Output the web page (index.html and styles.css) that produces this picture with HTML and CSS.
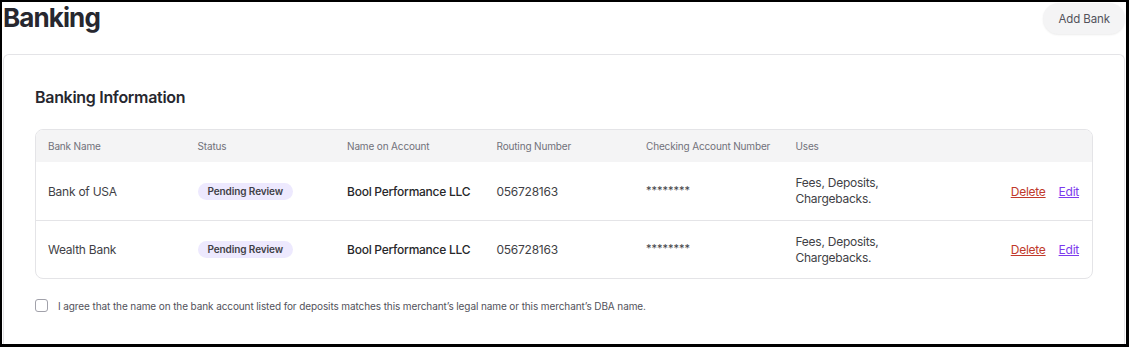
FILE: index.html
```html
<!DOCTYPE html>
<html>
  <head>
    <meta charset="utf-8"/>
    <title>Banking</title>
    <link rel="stylesheet" href="styles.css">
  </head>
  <body>
    <div class="frame">

      <div class="page-head">
        <h1 class="page-title">Banking</h1>
        <button class="add-bank">Add Bank</button>
      </div>

      <div class="card">
        <h2 class="card-title">Banking Information</h2>

        <div class="bank-table">
          <div class="bank-row bank-row-head">
            <div class="cell">Bank Name</div>
            <div class="cell">Status</div>
            <div class="cell">Name on Account</div>
            <div class="cell">Routing Number</div>
            <div class="cell">Checking Account Number</div>
            <div class="cell">Uses</div>
            <div class="cell"></div>
          </div>

          <div class="bank-row">
            <div class="cell">Bank of USA</div>
            <div class="cell"><span class="badge">Pending Review</span></div>
            <div class="cell cell-strong">Bool Performance LLC</div>
            <div class="cell">056728163</div>
            <div class="cell cell-mask">********</div>
            <div class="cell cell-uses">Fees, Deposits,<br>Chargebacks.</div>
            <div class="cell cell-actions">
              <a href="#" class="link-delete">Delete</a>
              <a href="#" class="link-edit">Edit</a>
            </div>
          </div>

          <div class="bank-row">
            <div class="cell">Wealth Bank</div>
            <div class="cell"><span class="badge">Pending Review</span></div>
            <div class="cell cell-strong">Bool Performance LLC</div>
            <div class="cell">056728163</div>
            <div class="cell cell-mask">********</div>
            <div class="cell cell-uses">Fees, Deposits,<br>Chargebacks.</div>
            <div class="cell cell-actions">
              <a href="#" class="link-delete">Delete</a>
              <a href="#" class="link-edit">Edit</a>
            </div>
          </div>
        </div>

        <label class="agree">
          <input type="checkbox" class="agree-box">
          <span>I agree that the name on the bank account listed for deposits matches this merchant’s legal name or this merchant’s DBA name.</span>
        </label>
      </div>

    </div>
  </body>
</html>
```

FILE: styles.css
```css
/* page is shot at 1129 x 347 */

body
{
margin: 0;
background-color: #FFFFFF;
font-family: "Inter", "Liberation Sans", sans-serif;
color: #27272A;
}

.frame
{
height: 347px;
box-sizing: border-box;
border: solid #000000;
border-width: 2px 3px 3px 2px;
display: flex;
flex-direction: column;
}

.page-head
{
height: 52px;
display: flex;
justify-content: space-between;
align-items: flex-start;
padding: 0 1px;
}

.page-title
{
margin: 0;
font-size: 26px;
line-height: 32px;
font-weight: 700;
color: #27272F;
letter-spacing: -0.9px;
}

.add-bank
{
margin-top: 1px;
height: 31px;
padding: 0 15px;
border: none;
border-radius: 16px;
background-color: #F4F4F5;
box-shadow: 0 1px 2px rgba(0, 0, 0, 0.08);
font-family: inherit;
font-size: 11.5px;
letter-spacing: -0.1px;
color: #52525B;
}

.card
{
flex: 1;
margin: 0 1px 0 1px;
padding: 31px 31px 0 31px;
border: 1px solid #E4E4E7;
border-bottom: none;
border-radius: 6px 6px 0 0;
}

.card-title
{
margin: 0 0 21px 0;
font-size: 16px;
line-height: 22px;
font-weight: 600;
color: #27272F;
letter-spacing: -0.3px;
}

.bank-table
{
border: 1px solid #E4E4E7;
border-radius: 8px;
overflow: hidden;
}

.bank-row
{
display: grid;
grid-template-columns: repeat(6, 149.5px) 1fr;
align-items: center;
height: 58px;
box-sizing: border-box;
font-size: 12px;
letter-spacing: -0.25px;
color: #3F3F46;
}

.bank-row + .bank-row
{
border-top: 1px solid #E4E4E7;
}

.bank-row-head
{
height: 32px;
background-color: #F4F4F5;
font-size: 10px;
letter-spacing: -0.15px;
color: #71717A;
}

.bank-row-head + .bank-row
{
border-top: none;
}

.cell
{
padding-left: 12px;
white-space: nowrap;
}

.cell-strong
{
font-weight: 500;
color: #27272A;
}

.cell-mask
{
font-size: 11px;
letter-spacing: 0;
padding-bottom: 3px;
}

.cell-uses
{
line-height: 16px;
color: #3F3F46;
}

.cell-actions
{
display: flex;
justify-content: flex-end;
gap: 13px;
padding-right: 13px;
}

.badge
{
display: inline-block;
padding: 2px 10px;
border-radius: 9px;
background-color: #EDE9FE;
font-size: 10px;
line-height: 13px;
font-weight: 600;
letter-spacing: -0.1px;
color: #3F3F46;
}

.link-delete
{
color: #C0392B;
}

.link-edit
{
color: #7C3AED;
}

.agree
{
display: flex;
align-items: center;
gap: 10px;
margin-top: 20px;
font-size: 10px;
letter-spacing: -0.1px;
color: #52525B;
}

.agree-box
{
appearance: none;
margin: 0;
width: 13px;
height: 13px;
border: 1.5px solid #A1A1AA;
border-radius: 3px;
}
```
